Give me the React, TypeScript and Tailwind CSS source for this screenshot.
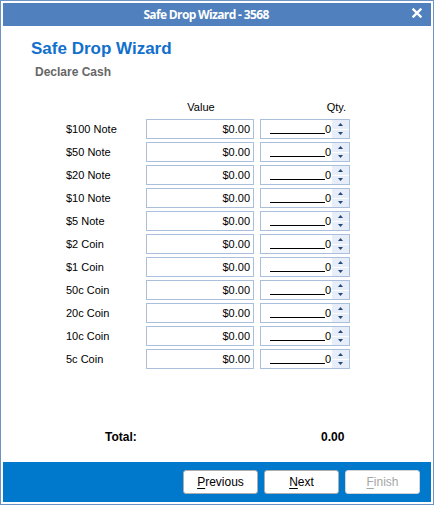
const rows = ['$100 Note', '$50 Note', '$20 Note', '$10 Note', '$5 Note', '$2 Coin', '$1 Coin', '50c Coin', '20c Coin', '10c Coin', '5c Coin'];

const sans = "font-['Liberation_Sans',Arial,sans-serif]";

function Spinner() {
  return (
    <div className="w-[17px] h-full flex flex-col bg-[#e7eef9]">
      <div className="flex-1 flex items-center justify-center border-b border-white">
        <svg width="5" height="3" viewBox="0 0 5 3">
          <path d="M2.5 0 L5 3 L0 3 Z" fill="#24487a" />
        </svg>
      </div>
      <div className="flex-1 flex items-center justify-center">
        <svg width="5" height="3" viewBox="0 0 5 3">
          <path d="M0 0 L5 0 L2.5 3 Z" fill="#24487a" />
        </svg>
      </div>
    </div>
  );
}

function Btn({ label, disabled }: { label: string; disabled?: boolean }) {
  return (
    <button
      className={`w-[75px] h-[24px] bg-white rounded-[3px] border text-[12px] ${sans} ${
        disabled ? 'border-[#d4d4d4] text-[#a6a6a6]' : 'border-[#adadad] text-black'
      }`}
    >
      <span className="underline underline-offset-[2px]">{label[0]}</span>
      {label.slice(1)}
    </button>
  );
}

export default function App() {
  return (
    <div className={`w-[434px] h-[505px] bg-white border border-[#6c93c6] p-[2px] flex flex-col ${sans}`}>
      <div className="h-[23px] bg-[#5080bd] flex items-center justify-center relative shrink-0 pr-[22px]">
        <span className="text-white font-bold text-[12px] font-['Open_Sans',sans-serif] tracking-[-0.65px]">Safe Drop Wizard - 3568</span>
        <svg className="absolute right-[9px] top-[5px]" width="10" height="10" viewBox="0 0 10 10">
          <path d="M1.5 1.5 L8.5 8.5 M8.5 1.5 L1.5 8.5" stroke="white" strokeWidth="2.4" strokeLinecap="square" />
        </svg>
      </div>

      <div className="flex-1 flex flex-col pl-[28px] pt-[11px]">
        <div className="text-[17px] leading-[24px] font-bold text-[#1170cc]">
          Safe Drop Wizard
        </div>
        <div className="mt-[3px] ml-[4px] text-[12px] leading-[16px] font-bold text-[#666666]">
          Declare Cash
        </div>

        <div className="ml-[35px] mt-[18px] flex flex-col">
          <div className="flex h-[18px] items-center text-[11px] text-black mb-[3px]">
            <div className="w-[80px]" />
            <div className="w-[108px] text-center pl-[2px]">Value</div>
            <div className="ml-[6px] w-[90px] text-right pr-[4px]">Qty.</div>
          </div>
          {rows.map(r => (
            <div key={r} className="flex items-center h-[20px] mb-[3px]">
              <div className="w-[80px] text-[11px] text-black whitespace-nowrap">{r}</div>
              <div className="w-[108px] h-[20px] border border-[#a9bfdc] bg-white flex items-center justify-end pr-[3px] text-[11px] text-black">
                $0.00
              </div>
              <div className="ml-[6px] w-[90px] h-[20px] border border-[#a9bfdc] bg-white flex items-stretch">
                <div className="flex-1 flex items-center justify-end pr-[1px] text-[11px] text-black">
                  <span className="inline-block w-[55px] h-[12px] border-b border-black -translate-y-[1px]" />
                  <span>0</span>
                </div>
                <Spinner />
              </div>
            </div>
          ))}
        </div>

        <div className="mt-auto mb-[16px] flex items-center text-[12px] font-bold text-black">
          <div className="ml-[74px] w-[150px]">Total:</div>
          <div className="ml-[66px]">0.00</div>
        </div>
      </div>

      <div className="h-[40px] bg-[#0079cc] flex items-center justify-end gap-[6px] pr-[11px] shrink-0">
        <Btn label="Previous" />
        <Btn label="Next" />
        <Btn label="Finish" disabled />
      </div>
    </div>
  );
}
